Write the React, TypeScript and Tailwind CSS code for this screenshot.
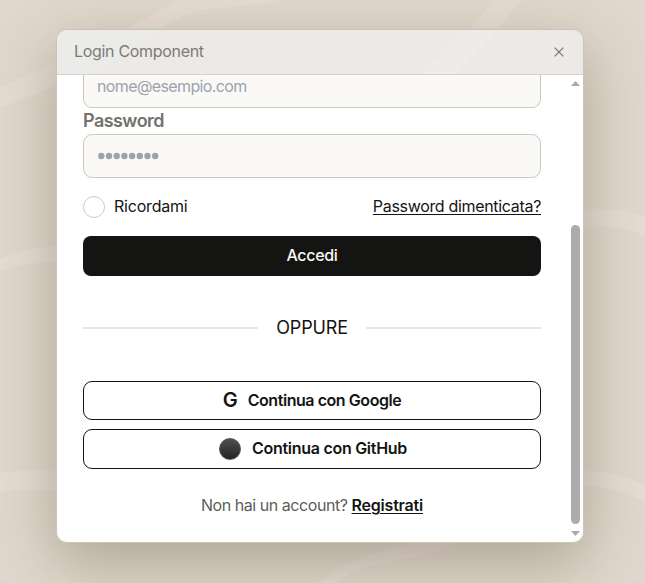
import React from "react";

function Backdrop() {
  return (
    <svg className="absolute inset-0 h-full w-full" viewBox="0 0 645 583" preserveAspectRatio="none" fill="#e5dcd2">
      <path d="M0 87C58 62 112 39 160 10L181 0H280C245 9 213 6 194 12C172 20 157 31 139 42C92 70 48 91 0 107Z" />
      <path d="M494 0H521L496 30L456 74H420L469 30Z" />
      <path d="M0 259Q27 248 57 246V262Q23 262 0 271Z" />
      <path d="M0 473Q27 469 57 471V490H30Q15 490 0 492Z" />
      <path d="M583 209H598C619 209 632 212 645 217V236C630 230 624 227 598 227H583Z" />
      <path d="M583 471H590C612 472 628 478 645 485V502C622 491 606 486 583 486Z" />
      <path d="M318 583C339 567 366 554 410 543H456C430 557 389 560 358 570C347 574 341 579 336 583Z" />
    </svg>
  );
}

function Header() {
  return (
    <header className="relative flex h-[45px] shrink-0 items-center justify-between border-b border-[#d5d2cf] bg-[#ece9e6] pr-[19px] pl-[17px]">
      <svg className="absolute inset-0 h-full w-full" viewBox="0 0 526 44" preserveAspectRatio="none" fill="#ebebeb">
        <path d="M0 0H100L66 28L30 44H0Z" opacity=".8" />
        <path d="M412 0H439L399 44H363Z" fill="#eeebeb" />
      </svg>
      <h1 className="relative pb-[2px] text-[16px] leading-6 tracking-[-0.31px] text-[#7c7b78]">Login Component</h1>
      <svg className="relative" width="10" height="10" viewBox="0 0 10 10" stroke="#747370" strokeWidth="1.2" fill="none">
        <path d="M.7.7 9.3 9.3M9.3.7.7 9.3" />
      </svg>
    </header>
  );
}

function Scrollbar() {
  return (
    <div className="flex w-[15px] shrink-0 flex-col items-center pt-[6px] pb-[6px]">
      <svg width="9" height="5" viewBox="0 0 9 5" fill="#aaa"><path d="M0 5 4.5 0 9 5Z" /></svg>
      <div className="mt-[139px] h-[299px] w-[9px] rounded-full bg-[#acacac]" />
      <svg className="mt-[7px]" width="9" height="5" viewBox="0 0 9 5" fill="#aaa"><path d="M0 0 4.5 5 9 0Z" /></svg>
    </div>
  );
}

export default function App() {
  return (
    <main className="relative h-[583px] w-[645px] overflow-hidden bg-[#e0d8cc] pt-[29px] pl-[56px] font-['Inter',sans-serif] text-[16px] text-[#141413]">
      <Backdrop />
      <section className="relative flex h-[514px] w-[528px] flex-col overflow-hidden rounded-[11px] border border-[#cbc3b6] shadow-[0_20px_60px_rgba(75,60,45,0.34)]">
        <Header />
        <div className="flex min-h-0 flex-1 bg-white">
          <form className="flex w-[511px] flex-col pr-[27px] pl-[26px]">
            <div className="h-[33px] shrink-0 rounded-b-[9px] border border-t-0 border-[#c9c8c4] bg-[#faf9f5] pl-[13px] leading-[23px] tracking-[-0.62px] text-[#9ca3af]">nome@esempio.com</div>
            <label className="mt-px h-[25px] text-[18px] leading-[24px] font-semibold tracking-[-0.55px] text-[#73726c]">Password</label>
            <div className="flex h-[44px] shrink-0 items-center gap-[1.7px] rounded-[9px] border border-[#c9c8c4] bg-[#faf9f5] pl-[14px]">
              <svg width="62" height="8" viewBox="0 0 62 8" fill="#9ca3af">
                {Array.from({ length: 8 }, (_, i) => <circle key={i} cx={3.3 + i * 7.7} cy="4" r="3.2" />)}
              </svg>
            </div>
            <div className="mt-[18px] flex h-[22px] items-center">
              <span className="size-[22px] rounded-full border border-[#cccbc8]" />
              <span className="ml-[9px] pb-[2px] tracking-[-0.2px]">Ricordami</span>
              <a className="ml-auto pb-[2px] tracking-[-0.32px] underline decoration-1 underline-offset-2">Password dimenticata?</a>
            </div>
            <button type="button" className="mt-[18px] h-[40px] shrink-0 rounded-[8px] bg-[#141413] pb-[2px] font-medium tracking-[-0.3px] text-[#faf9f5]">Accedi</button>
            <div className="mt-[39px] flex h-[26px] items-center gap-[18px] text-[18px]">
              <span className="h-[2px] flex-1 bg-[#e6e6e6]" />
              <span className="pb-px tracking-[-0.15px]">OPPURE</span>
              <span className="h-[2px] flex-1 bg-[#e6e6e6]" />
            </div>
            <button type="button" className="mt-[40px] flex h-[39px] shrink-0 items-center justify-center rounded-[9px] border border-[#141413] pb-[2px] font-semibold">
              <span className="mr-[10px] text-[20px]">G</span><span className="tracking-[-0.44px]">Continua con Google</span>
            </button>
            <button type="button" className="mt-[9px] flex h-[40px] shrink-0 items-center justify-center rounded-[9px] border border-[#141413] pl-[2px] font-semibold">
              <span className="mr-[11px] size-[22px] rounded-full border border-[#555] bg-linear-to-b from-[#505050] to-[#232323]" /><span className="pb-[2px] tracking-[-0.28px]">Continua con GitHub</span>
            </button>
            <p className="mt-[24px] text-center leading-6 tracking-[-0.45px] text-[#5e5d59]">Non hai un account? <a className="font-semibold tracking-[-0.2px] text-[#141413] underline underline-offset-2">Registrati</a></p>
          </form>
          <Scrollbar />
        </div>
      </section>
    </main>
  );
}
